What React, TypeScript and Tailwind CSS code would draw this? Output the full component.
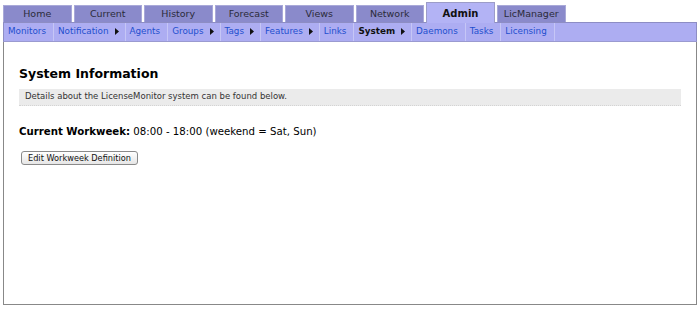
import React from "react";

const tabs = ["Home", "Current", "History", "Forecast", "Views", "Network", "Admin", "LicManager"];

const subItems: { label: string; arrow?: boolean; active?: boolean }[] = [
  { label: "Monitors" },
  { label: "Notification", arrow: true },
  { label: "Agents" },
  { label: "Groups", arrow: true },
  { label: "Tags", arrow: true },
  { label: "Features", arrow: true },
  { label: "Links" },
  { label: "System", arrow: true, active: true },
  { label: "Daemons" },
  { label: "Tasks" },
  { label: "Licensing" },
];

function Arrow() {
  return (
    <svg width="4" height="7" viewBox="0 0 4 7" className="ml-[6px] -translate-y-[1px]">
      <path d="M0 0 L4 3.5 L0 7 Z" fill="#111" />
    </svg>
  );
}

export default function App() {
  return (
    <div
      className="w-[700px] h-[310px] bg-white pt-[3px] px-[3px] text-[#222]"
      style={{ fontFamily: '"DejaVu Sans", Verdana, sans-serif' }}
    >
      {/* Top tabs */}
      <div className="flex items-end h-[19px] gap-[2px]">
        {tabs.map((t) =>
          t === "Admin" ? (
            <div
              key={t}
              className="w-[69px] h-[21px] -mb-[1px] relative z-10 flex items-center justify-center bg-[#b3b3f5] border border-b-0 border-[#9c9cc8] text-[10px] font-bold text-[#111]"
            >
              {t}
            </div>
          ) : (
            <div
              key={t}
              className="w-[68.5px] h-[17px] flex items-center justify-center bg-[#8a8acb] border-t border-l border-r border-[#a9a9d8] text-[9.5px] text-[#2a2a3a]"
            >
              {t}
            </div>
          )
        )}
      </div>

      {/* Sub navigation */}
      <div className="flex h-[20px] items-center bg-[#adadf2] border border-[#8d8dc4] border-b-[#9a9ad0]">
        {subItems.map((s) => (
          <div
            key={s.label}
            className={`flex items-center h-full pl-[4px] border-r border-[#c6c6f6] text-[8.8px] ${s.arrow ? "pr-[6px]" : "pr-[7px]"}`}
          >
            <span className={s.active ? "font-bold text-[#111]" : "text-[#1f4fcf]"}>{s.label}</span>
            {s.arrow && <Arrow />}
          </div>
        ))}
      </div>

      {/* Content */}
      <div className="h-[263px] border-l border-r border-b border-[#888] pl-[15px] pr-[15px] pt-[23px]">
        <h2 className="text-[12.5px] font-bold text-black">System Information</h2>
        <div className="mt-[5px] h-[17px] flex items-center bg-[#ebebeb] border-b border-dotted border-[#d4d4d4] px-[6px] text-[8.5px] text-[#333]">
          Details about the LicenseMonitor system can be found below.
        </div>
        <div className="mt-[18px] text-[10.2px] text-black">
          <span className="font-bold">Current Workweek:</span> 08:00 - 18:00 (weekend = Sat, Sun)
        </div>
        <button className="mt-[12px] ml-[2px] h-[14px] px-[6px] flex items-center rounded-[3px] border border-[#8a8a8a] bg-gradient-to-b from-white to-[#e6e6e6] text-[8.2px] text-[#111]">
          Edit Workweek Definition
        </button>
      </div>
    </div>
  );
}
